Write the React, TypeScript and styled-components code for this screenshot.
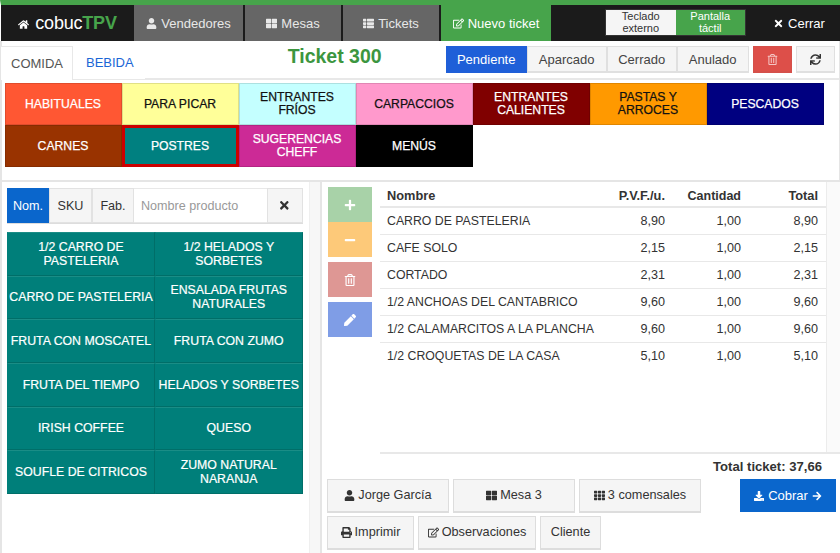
import React from "react";
import styled, { createGlobalStyle } from "styled-components";
import {
  FaHome, FaUser, FaThLarge, FaThList, FaRegEdit, FaTimes, FaRegTrashAlt, FaSync,
  FaTh, FaPrint, FaPlus, FaMinus, FaPen, FaDownload, FaArrowRight,
} from "react-icons/fa";

const Global = createGlobalStyle`
  html, body { margin: 0; padding: 0; background: #fff; }
  body { font-family: "Liberation Sans", Arial, sans-serif; font-size: 13px; color: #333; }
  * { box-sizing: border-box; }
`;

const Page = styled.div`
  width: 840px; height: 553px; overflow: hidden; display: flex; flex-direction: column;
`;

const Navbar = styled.nav`
  height: 41px; flex: none; display: flex; background: #1b1b1b; border-top: 5px solid #47a44b;
  border-left: 1px solid #fff;
`;
const Brand = styled.div`
  width: 133px; display: flex; align-items: center; justify-content: center; gap: 6px;
  color: #fff; font-size: 18px; letter-spacing: -0.2px; svg { font-size: 11px; margin-top: 3px; }
  b { color: #47a44b; font-weight: 700; }
`;
const NavItem = styled.div<{ $active?: boolean; $w: number }>`
  width: ${p => p.$w}px; margin-right: 2px; display: flex; align-items: center; justify-content: center; gap: 4px;
  background: ${p => (p.$active ? "#47a44b" : "#666")}; color: ${p => (p.$active ? "#fff" : "#e8e8e8")};
  font-size: 13px; svg { font-size: 11px; }
`;
const Toggle = styled.div`
  display: flex; margin: 4px 0 0 52px; height: 27px; width: 141px; border: 1px solid #333;
`;
const ToggleOpt = styled.div<{ $on?: boolean }>`
  flex: 1; display: flex; align-items: center; justify-content: center; text-align: center;
  font-size: 11px; line-height: 11.5px; background: ${p => (p.$on ? "#47a44b" : "#f5f5f5")};
  color: ${p => (p.$on ? "#fff" : "#333")};
`;
const Close = styled.div`
  flex: 1; display: flex; align-items: center; justify-content: center; gap: 4px; color: #fff;
  font-size: 13px; padding-left: 12px; svg { font-size: 11px; }
`;

const TopPanel = styled.section`
  height: 141px; flex: none; border-left: 2px solid #e5e5e5; border-right: 1px solid #e5e5e5;
  border-bottom: 2px solid #e5e5e5; display: flex; flex-direction: column;
`;
const TabRow = styled.div`
  height: 39px; flex: none; display: flex; padding-top: 5px; border-bottom: 2px solid #e8e8e8;
`;
const Tabs = styled.div`
  display: flex; margin-left: -1px;
`;
const Tab = styled.div<{ $active?: boolean }>`
  height: ${p => (p.$active ? "34px" : "33px")}; padding: 0 11px 1px ${p => (p.$active ? "10px" : "13px")}; display: flex; align-items: center;
  font-size: 13px; color: ${p => (p.$active ? "#555" : "#1a66d6")}; background: #fff;
  ${p => p.$active && "border: 1px solid #e8e8e8; border-bottom: none; border-left: none; z-index: 1; padding-right: 9px;"}
`;
const Title = styled.h1`
  margin: -3px 0 0 143px; width: 98px; font-size: 19.5px; line-height: 26px; font-weight: 700; color: #3c963f; white-space: nowrap;
`;
const StatusGroup = styled.div`
  display: flex; height: 27px; margin-left: 60px; width: 303px;
`;
const Status = styled.div<{ $active?: boolean; $w: number }>`
  width: ${p => p.$w}px; display: flex; align-items: center; justify-content: center; font-size: 13px;
  background: ${p => (p.$active ? "#1f5fd8" : "#f5f5f5")}; color: ${p => (p.$active ? "#fff" : "#444")};
  border: 1px solid ${p => (p.$active ? "#1f5fd8" : "#e0e0e0")}; border-bottom-width: 2px;
`;
const IconBtn = styled.div<{ $danger?: boolean; $ml: number }>`
  width: 39px; height: 27px; margin-left: ${p => p.$ml}px; display: flex; align-items: center; justify-content: center;
  background: ${p => (p.$danger ? "#dd4f49" : "#f5f5f5")}; color: ${p => (p.$danger ? "#f5c6c4" : "#333")};
  border: 1px solid ${p => (p.$danger ? "#d5504a" : "#e0e0e0")}; border-bottom-width: 2px; font-size: 11px;
`;
const CatGrid = styled.div`
  display: grid; grid-template-columns: repeat(7, 117px); grid-auto-rows: 42px; padding: 3px 0 0 2.5px;
`;
const Cat = styled.div<{ $bg: string; $fg: string; $sel?: boolean }>`
  display: flex; align-items: center; justify-content: center; text-align: center; padding: 0 8px;
  font-size: 12.2px; line-height: 13px; background: ${p => p.$bg}; color: ${p => p.$fg};
  -webkit-text-stroke: 0.25px ${p => p.$fg};
  border: ${p => (p.$sel ? "3px solid #cc0000" : "1px solid rgba(0,0,0,.12)")};
`;

const Split = styled.div`
  flex: 1; display: flex; min-height: 0; border-left: 2px solid #e5e5e5;
`;
const Left = styled.section`
  width: 307px; flex: none; padding: 6px 6.5px 0 5px; display: flex; flex-direction: column;
`;
const SearchBar = styled.div`
  display: flex; height: 36px; border-bottom: 1px solid #ddd;
`;
const SearchBtn = styled.div<{ $active?: boolean; $w: number }>`
  width: ${p => p.$w}px; flex: none; display: flex; align-items: center; justify-content: center; font-size: 12.6px;
  background: ${p => (p.$active ? "#0a66cc" : "#f5f5f5")}; color: ${p => (p.$active ? "#fff" : "#333")};
  border: 1px solid ${p => (p.$active ? "#0a66cc" : "#e2e2e2")};
`;
const SearchInput = styled.input`
  flex: 1; min-width: 0; height: 100%; border: 1px solid #e8e8e8; border-left: none; border-right: none; outline: none; padding: 0 7px;
  font: 12.6px "Liberation Sans", Arial, sans-serif; color: #555; &::placeholder { color: #999; }
`;
const ProdGrid = styled.div`
  margin-top: 8px; display: grid; grid-template-columns: 148px 147.5px; grid-auto-rows: 43.67px;
`;
const Prod = styled.div`
  display: flex; align-items: center; justify-content: center; text-align: center;
  background: #007f7a; color: #fff; font-size: 12.3px; line-height: 14px; white-space: pre-line;
  -webkit-text-stroke: 0.2px #fff;
  border: 1px solid #006e68; border-top-color: #1a8d86; border-left-color: #007f7a;
`;
const Divider = styled.div`
  width: 13px; flex: none; background: #f7f7f7; border-left: 1px solid #efefef; border-right: 2px solid #e5e5e5;
`;
const Right = styled.section`
  flex: 1; min-width: 0; display: flex; flex-direction: column;
`;
const Upper = styled.div`
  height: 272px; flex: none; display: flex; position: relative;
  &::after { content: ""; position: absolute; left: 58px; right: 0; bottom: 0; height: 2px; background: #e8e8e8; }
`;
const Actions = styled.div`
  width: 44px; margin: 5px 8px 0 6px; flex: none; display: flex; flex-direction: column;
`;
const Action = styled.div<{ $bg: string; $gap?: number }>`
  height: 35px; flex: none; display: flex; align-items: center; justify-content: center; color: #fff; font-size: 12px;
  background: ${p => p.$bg}; margin-top: ${p => p.$gap ?? 0}px;
`;
const TableWrap = styled.div`
  width: 446px; flex: none; padding-top: 5px;
`;
const Table = styled.table`
  width: 100%; table-layout: fixed; border-collapse: collapse; font-size: 12.6px; color: #333;
  th { height: 20px; text-align: right; padding: 0 8px 2px; font-weight: 700; font-size: 12.8px; border-bottom: 2px solid #e8e8e8; }
  th:nth-child(3) { font-size: 12.5px; }
  td { height: 27px; text-align: right; padding: 0 8px; border-bottom: 1px solid #e8e8e8; white-space: nowrap; }
  tr:last-child td { border-bottom: none; }
  th:first-child, td:first-child { text-align: left; padding-left: 7px; }
  td:first-child { font-size: 12.3px; }
`;
const Track = styled.div`
  flex: 1; background: #fafafa; border-left: 1px solid #ececec;
`;
const Lower = styled.div`
  flex: 1; min-height: 0; padding: 5px 4px 0 5px; position: relative;
`;
const Total = styled.div`
  text-align: right; font-weight: 700; font-size: 13.1px; line-height: 16px; color: #333; padding-right: 14px;
`;
const Foot = styled.div`
  display: flex; margin-top: 4px; justify-content: space-between; align-items: flex-start;
`;
const BtnRows = styled.div`
  display: flex; flex-direction: column; gap: 3.5px;
`;
const BtnRow = styled.div`
  display: flex; gap: 4px;
`;
const Btn = styled.div<{ $w: number }>`
  width: ${p => p.$w}px; height: 33.5px; display: flex; align-items: center; justify-content: center; gap: 3px;
  background: #f5f5f5; color: #333; font-size: 12.7px; border: 1px solid #ddd; border-bottom-width: 2px; border-right-width: 1px;
  svg { font-size: 11px; }
`;
const Pay = styled.div`
  width: 96px; height: 33px; display: flex; align-items: center; justify-content: center; gap: 4px;
  background: #0a66cc; color: #fff; font-size: 13px; svg { font-size: 10px; }
`;

const cats: [string, string, string, boolean?][] = [
  ["HABITUALES", "#ff5733", "#fff"], ["PARA PICAR", "#ffff99", "#111"], ["ENTRANTES FRÍOS", "#c4ffff", "#111"],
  ["CARPACCIOS", "#ff99cc", "#111"], ["ENTRANTES CALIENTES", "#800000", "#fff"], ["PASTAS Y ARROCES", "#ff9900", "#111"],
  ["PESCADOS", "#000080", "#fff"], ["CARNES", "#993300", "#fff"], ["POSTRES", "#008080", "#fff", true],
  ["SUGERENCIAS CHEFF", "#cc2a96", "#fff"], ["MENÚS", "#000", "#fff"],
];
const prods = [
  "1/2 CARRO DE\nPASTELERIA", "1/2 HELADOS Y\nSORBETES", "CARRO DE PASTELERIA", "ENSALADA FRUTAS\nNATURALES",
  "FRUTA CON MOSCATEL", "FRUTA CON ZUMO", "FRUTA DEL TIEMPO", "HELADOS Y SORBETES", "IRISH COFFEE", "QUESO",
  "SOUFLE DE CITRICOS", "ZUMO NATURAL\nNARANJA",
];
const lines: [string, string, string][] = [
  ["CARRO DE PASTELERIA", "8,90", "8,90"], ["CAFE SOLO", "2,15", "2,15"], ["CORTADO", "2,31", "2,31"],
  ["1/2 ANCHOAS DEL CANTABRICO", "9,60", "9,60"], ["1/2 CALAMARCITOS A LA PLANCHA", "9,60", "9,60"],
  ["1/2 CROQUETAS DE LA CASA", "5,10", "5,10"],
];

export default function App() {
  return (
    <Page>
      <Global />
      <Navbar>
        <Brand><FaHome /><span>cobuc<b>TPV</b></span></Brand>
        <NavItem $w={109}><FaUser />Vendedores</NavItem>
        <NavItem $w={96}><FaThLarge />Mesas</NavItem>
        <NavItem $w={96}><FaThList />Tickets</NavItem>
        <NavItem $w={110} $active><FaRegEdit />Nuevo ticket</NavItem>
        <Toggle>
          <ToggleOpt>Teclado<br />externo</ToggleOpt>
          <ToggleOpt $on>Pantalla<br />táctil</ToggleOpt>
        </Toggle>
        <Close><FaTimes />Cerrar</Close>
      </Navbar>
      <TopPanel>
        <TabRow>
          <Tabs>
            <Tab $active>COMIDA</Tab>
            <Tab>BEBIDA</Tab>
          </Tabs>
          <Title>Ticket 300</Title>
          <StatusGroup>
            <Status $w={81} $active>Pendiente</Status>
            <Status $w={80}>Aparcado</Status>
            <Status $w={70}>Cerrado</Status>
            <Status $w={72}>Anulado</Status>
          </StatusGroup>
          <IconBtn $danger $ml={4}><FaRegTrashAlt /></IconBtn>
          <IconBtn $ml={4}><FaSync /></IconBtn>
        </TabRow>
        <CatGrid>
          {cats.map(([n, bg, fg, sel]) => <Cat key={n} $bg={bg} $fg={fg} $sel={sel}>{n}</Cat>)}
        </CatGrid>
      </TopPanel>
      <Split>
        <Left>
          <SearchBar>
            <SearchBtn $w={42} $active>Nom.</SearchBtn>
            <SearchBtn $w={43}>SKU</SearchBtn>
            <SearchBtn $w={42}>Fab.</SearchBtn>
            <SearchInput placeholder="Nombre producto" readOnly />
            <SearchBtn $w={36}><FaTimes /></SearchBtn>
          </SearchBar>
          <ProdGrid>
            {prods.map(p => <Prod key={p}>{p}</Prod>)}
          </ProdGrid>
        </Left>
        <Divider />
        <Right>
          <Upper>
            <Actions>
              <Action $bg="#a8d2a8"><FaPlus /></Action>
              <Action $bg="#fdc979"><FaMinus /></Action>
              <Action $bg="#de9794" $gap={5}><FaRegTrashAlt /></Action>
              <Action $bg="#7f9de6" $gap={5}><FaPen /></Action>
            </Actions>
            <TableWrap>
              <Table>
                <colgroup>
                  <col style={{ width: 220 }} /><col style={{ width: 73 }} /><col style={{ width: 76 }} /><col style={{ width: 77 }} />
                </colgroup>
                <thead>
                  <tr><th>Nombre</th><th>P.V.F./u.</th><th>Cantidad</th><th>Total</th></tr>
                </thead>
                <tbody>
                  {lines.map(([n, p, t]) => (
                    <tr key={n}><td>{n}</td><td>{p}</td><td>1,00</td><td>{t}</td></tr>
                  ))}
                </tbody>
              </Table>
            </TableWrap>
            <Track />
          </Upper>
          <Lower>
            <Total>Total ticket: 37,66</Total>
            <Foot>
              <BtnRows>
                <BtnRow>
                  <Btn $w={122}><FaUser />Jorge García</Btn>
                  <Btn $w={122}><FaThLarge />Mesa 3</Btn>
                  <Btn $w={122}><FaTh />3 comensales</Btn>
                </BtnRow>
                <BtnRow>
                  <Btn $w={87}><FaPrint />Imprimir</Btn>
                  <Btn $w={118}><FaRegEdit />Observaciones</Btn>
                  <Btn $w={61}>Cliente</Btn>
                </BtnRow>
              </BtnRows>
              <Pay><FaDownload />Cobrar<FaArrowRight /></Pay>
            </Foot>
          </Lower>
        </Right>
      </Split>
    </Page>
  );
}
